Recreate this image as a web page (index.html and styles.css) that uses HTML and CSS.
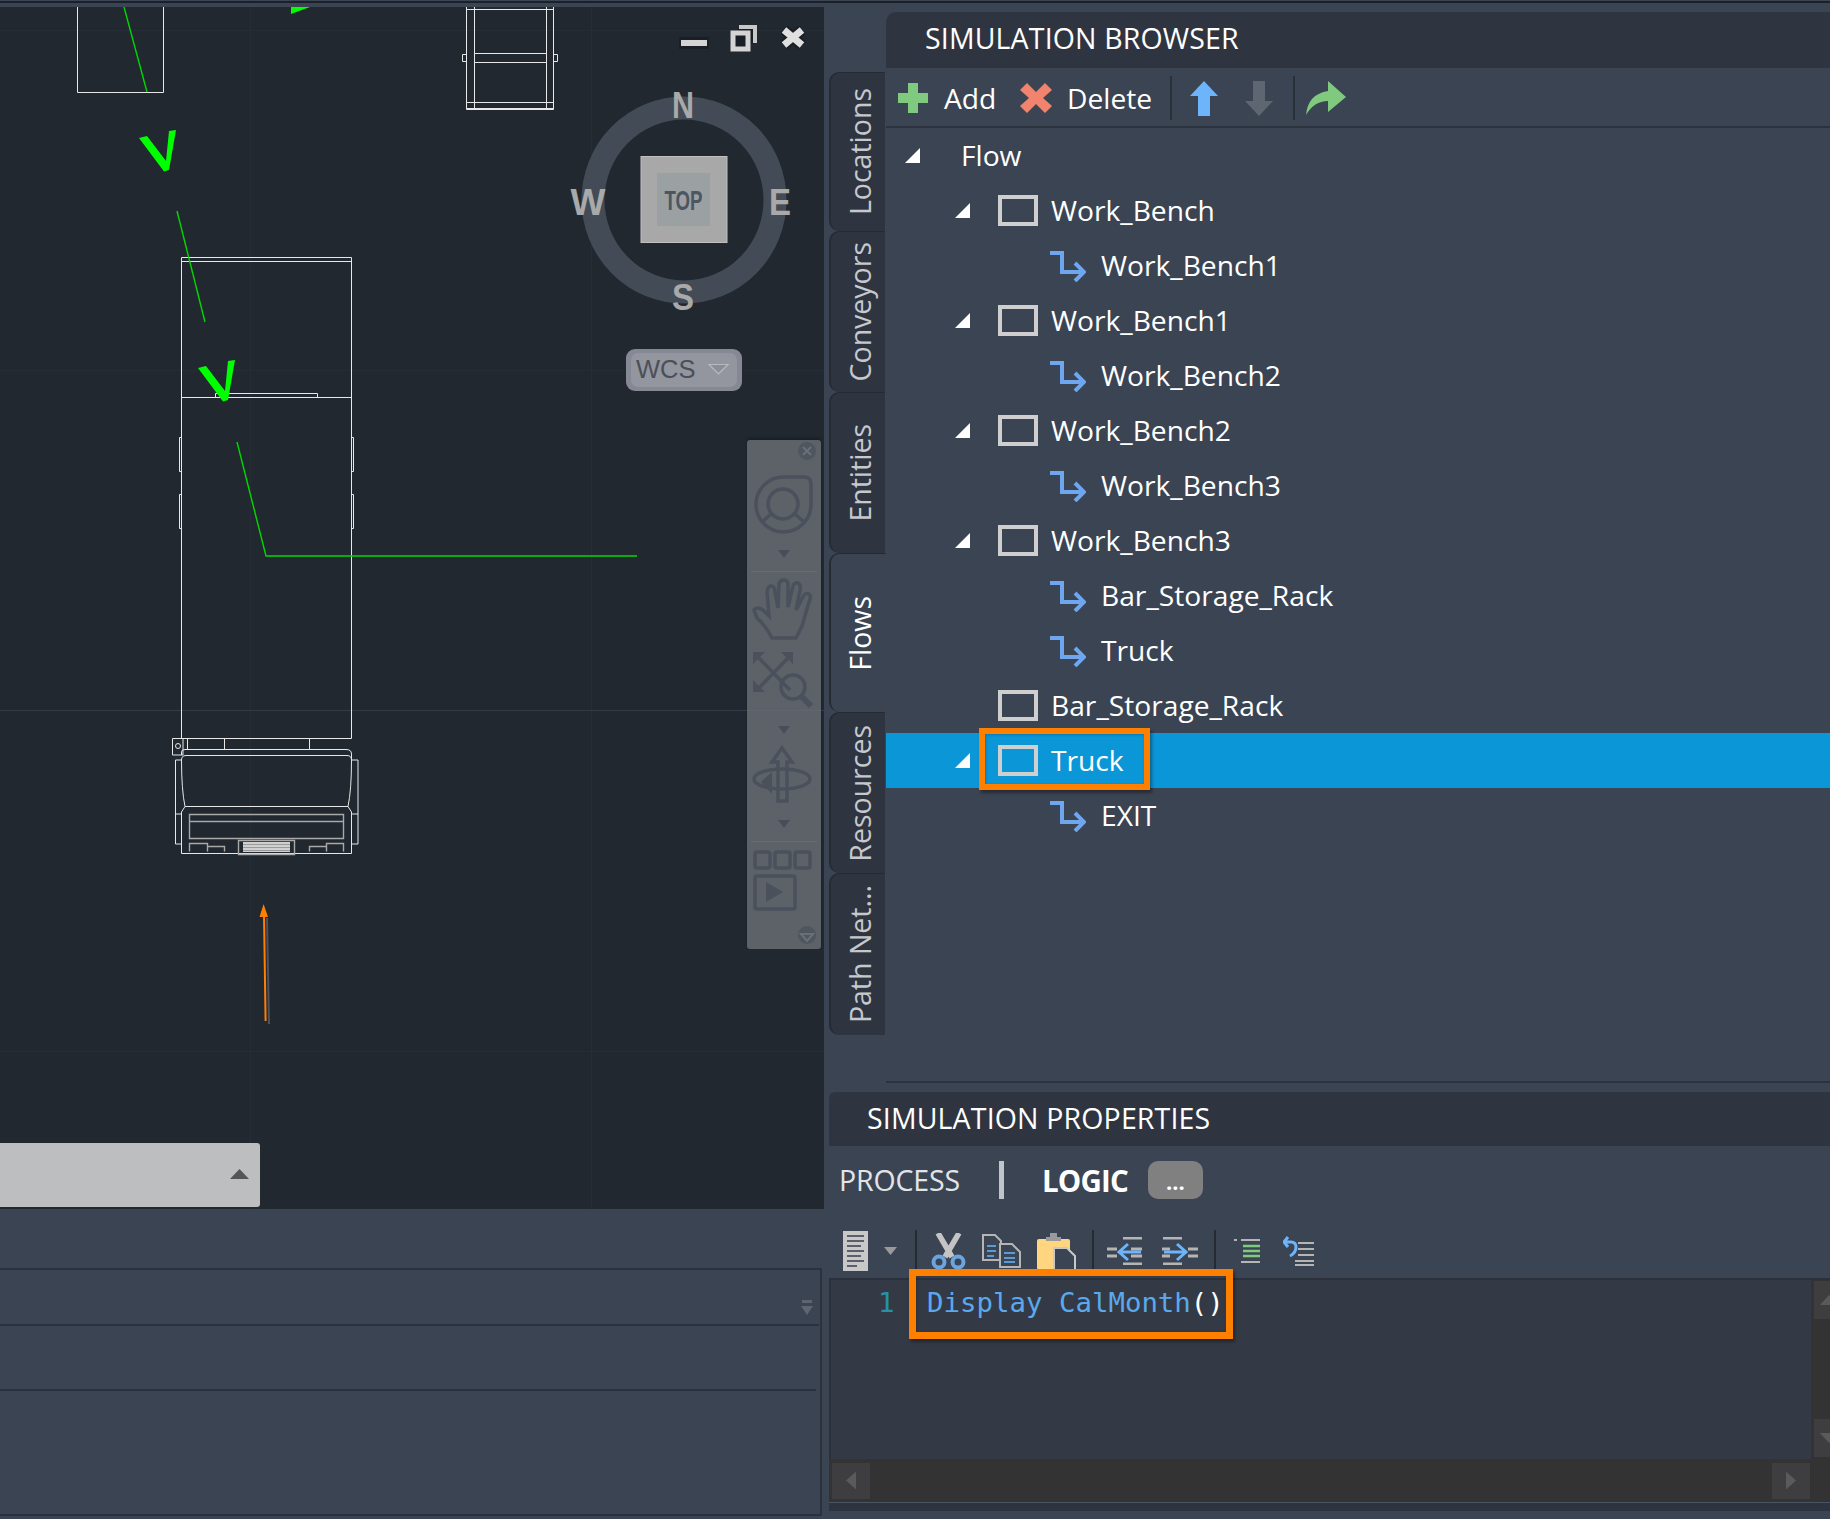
FILE: index.html
```html
<!DOCTYPE html>
<html lang="en">
<head>
<meta charset="UTF-8" />
<title>Simulation Browser</title>
<link rel="stylesheet" href="styles.css">
</head>
<body>
<svg class="defs" width="0" height="0">
  <symbol id="box" viewBox="0 0 40 31"><rect x="2" y="2" width="36" height="27" fill="none" stroke="#cfcfcf" stroke-width="4"/></symbol>
  <symbol id="link" viewBox="0 0 36 32"><path d="M0 3H12V22H31" fill="none" stroke="#6ea6f0" stroke-width="4"/><path d="M25 13L34 22L25 31" fill="none" stroke="#6ea6f0" stroke-width="4"/></symbol>
  <symbol id="caret" viewBox="0 0 12 8"><path d="M0 0H12L6 8Z" fill="#474e59"/></symbol>
</svg>

<div class="top-band"></div>
<div class="layout">

  <div class="left">
    <!-- cad viewport -->
    <div class="viewport">
      <svg class="canvas" viewBox="0 7 824 1202" width="824" height="1202">
        <g class="grid">
          <path d="M0 30.5H824M0 370.5H824M0 1051.5H824M250.5 7V1209M591.5 7V1209"/>
          <path class="grid-main" d="M0 710.5H824"/>
        </g>
        <g class="wire">
          <path d="M77.5 7V92.5H163.5V7"/>
          <path d="M466.5 7V109.5H553.5V7M474.5 7V109M546.5 7V109M466 9.5H554M474 53.5H546M474 62.5H546M466 102.5H554M466 108.5H554"/>
          <path d="M466 54.5H462.5V61.5H466M554 54.5H557.5V61.5H554"/>
          <path d="M181.5 257.5H351.5V738.5H181.5ZM181.5 261.5H351.5M181.5 397.5H351.5M215.5 397V393.5H317.5V397"/>
          <path d="M181 437.5H179.5V471.5H181M181 494.5H179.5V528.5H181M352 437.5H353.5V471.5H352M352 494.5H353.5V528.5H352"/>
          <path d="M187.5 738V749M224.5 738V749M309.5 738V749"/>
          <path d="M172.5 738.5H183V755H172.5Z"/>
          <circle cx="178" cy="746" r="2.5"/>
          <path d="M181.5 755V752Q181.5 749.5 185 749.5H346Q351.5 749.5 351.5 754V760"/>
          <path d="M181.5 760Q181.5 755.5 186 755.5H347Q351.5 755.5 351.5 760Q351.5 790 348 806.5H185Q181.5 790 181.5 760Z"/>
          <path d="M181.5 760H175.5V814H181.5M351.5 760H358V814H351.5"/>
          <path d="M185 806.5L181.5 812V853.5H351.5V812L348 806.5M175.5 814V844H181.5M358 814V844H351.5"/>
          <path class="wire-dim" d="M189.5 814.5H343.5V838.5H189.5ZM189.5 821.5H343.5"/>
          <path class="wire-dim" d="M238.5 840.5H294.5V854.5H238.5Z"/>
          <path class="wire-dim" d="M189.5 851.5V843.5H207.5V851.5M207.5 846.5H224.5V851.5M343.5 851.5V843.5H326.5V851.5M326.5 846.5H309.5V851.5"/>
        </g>
        <rect class="grille" x="243" y="842" width="47" height="10"/>
        <path class="grille-lines" d="M243 844.5H290M243 847.5H290M243 850.5H290"/>
        <g class="green-thin">
          <path d="M124 7L147 92"/>
          <path d="M177 211L205 322"/>
          <path d="M237 442L266 556H637"/>
        </g>
        <g class="green-fill">
          <polygon points="291,14 291,7 310,7"/>
          <polygon points="139,138 147,136 166,161 169,131 176,130 169,170 164,171.5"/>
          <polygon points="198,368 206,366 225,391 228,361 235,360 228,400 223,401.5"/>
        </g>
        <path class="arrow-shadow" d="M267 918L269 1024"/>
        <path class="arrow-shaft" d="M264 914L265.6 1021"/>
        <polygon class="arrow-head" points="263.6,904 259.5,917 268,917"/>
      </svg>

      <svg class="win-ctrls" viewBox="675 20 135 35" width="135" height="35">
        <rect class="win-halo" x="679" y="37" width="30" height="12"/>
        <rect class="win-icon" x="681" y="40" width="26" height="6"/>
        <path class="win-halo-line" d="M738 28H754V44H748V50H732V34H738Z"/>
        <path class="win-line" d="M739 27H755V43" />
        <rect class="win-box" x="733" y="33" width="15" height="16"/>
        <path class="win-x-halo" d="M784 30L802 45M802 30L784 45"/>
        <path class="win-x" d="M784 30L802 45M802 30L784 45"/>
      </svg>

      <svg class="viewcube" viewBox="570 85 230 315" width="230" height="315">
        <ellipse class="cube-ring" cx="684" cy="200" rx="91" ry="92"/>
        <rect class="cube-face" x="641" y="156.5" width="86" height="86"/>
        <rect class="cube-inner" x="657" y="173" width="53" height="53"/>
        <text class="cube-top" x="683.5" y="210" textLength="38" lengthAdjust="spacingAndGlyphs">TOP</text>
        <text class="cube-dir" x="683" y="118" textLength="22" lengthAdjust="spacingAndGlyphs">N</text>
        <text class="cube-dir" x="683" y="310" textLength="22" lengthAdjust="spacingAndGlyphs">S</text>
        <text class="cube-dir" x="588" y="215" textLength="35" lengthAdjust="spacingAndGlyphs">W</text>
        <text class="cube-dir" x="780" y="215" textLength="22" lengthAdjust="spacingAndGlyphs">E</text>
        <rect class="wcs-btn" x="626" y="349" width="116" height="42" rx="9"/>
        <rect class="wcs-in" x="631" y="353" width="106" height="34" rx="7"/>
        <text class="wcs-txt" x="636" y="378">WCS</text>
        <path class="wcs-caret" d="M709 364.5H728L718.500 374Z"/>
      </svg>

      <div class="nav-bar">
        <svg viewBox="747 440 74 509" width="74" height="509">
          <g class="nav-ic">
            <circle cx="807" cy="451" r="9" class="nav-solid"/>
            <path class="nav-x" d="M803 447L811 455M811 447L803 455"/>
            <path d="M783 477H804Q811 477 811 484V504A27.500 27.500 0 1 1 783 477Z"/>
            <circle cx="783" cy="504" r="15"/>
            <path d="M771 514L762 522M795 514L804 522"/>
            <use href="#caret" x="778" y="550" width="12" height="8"/>
            <path class="nav-sep" d="M751 571.500H817"/>
            <path d="M772 638Q766 626 757 618L754 610Q757 606 763 610L769 616L767 592Q768 586 771 586Q775 586 775 592L778 608L779 584Q780 580 784 580Q788 580 788 585L788 607L793 586Q795 582 798 583Q801 585 800 590L796 610L804 595Q807 592 810 595Q811 598 809 602L802 626L796 638Z"/>
            <path d="M757 656L790 690M790 656L757 690"/>
            <path class="nav-fill" d="M753 652H765L753 664ZM793 652H781L793 664ZM753 692H765L753 680Z"/>
            <circle cx="793" cy="687" r="12"/>
            <path class="nav-thick" d="M802 697L811 706"/>
            <use href="#caret" x="778" y="726" width="12" height="8"/>
            <path d="M778 801V762H772L782 748L792 762H787V801Z"/>
            <ellipse cx="782" cy="779" rx="28" ry="10"/>
            <path class="nav-fill" d="M761 782L772 772V794Z"/>
            <use href="#caret" x="778" y="820" width="12" height="8"/>
            <path class="nav-sep" d="M751 841.500H817"/>
            <rect x="755" y="852" width="15" height="16" rx="2"/>
            <rect x="775" y="852" width="15" height="16" rx="2"/>
            <rect x="795" y="852" width="15" height="16" rx="2"/>
            <rect x="755" y="876" width="40" height="33" rx="2"/>
            <path class="nav-fill" d="M766 882L783 892L766 902Z"/>
            <circle cx="807" cy="935" r="9" class="nav-solid"/>
            <path class="nav-x" d="M801 934H813L807 941Z"/>
          </g>
        </svg>
      </div>

      <div class="layout-tab"><span class="layout-arrow"></span></div>
    </div>

    <!-- command area -->
    <div class="cmd-box">
      <div class="cmd-row first">
        <svg class="cmd-ic" viewBox="0 0 12 16" width="12" height="16"><path d="M1 0H11V3H1ZM0 6H12L6 15Z" fill="#5e6570"/></svg>
      </div>
      <div class="cmd-row second"></div>
    </div>
  </div>

  <div class="right">
    <div class="browser-area">
      <div class="side-tabs">
        <div class="side-tab t1"><span>Locations</span></div>
        <div class="side-tab t2"><span>Conveyors</span></div>
        <div class="side-tab t3"><span>Entities</span></div>
        <div class="side-tab t4 active"><span>Flows</span></div>
        <div class="side-tab t5"><span>Resources</span></div>
        <div class="side-tab t6"><span>Path Net...</span></div>
      </div>

      <div class="browser">
        <div class="panel-title browser-title">SIMULATION BROWSER</div>
        <div class="browser-tools">
          <div class="tool-btn add">
            <svg viewBox="0 0 30 30" width="30" height="30"><path d="M10 0H20V10H30V20H20V30H10V20H0V10H10Z" fill="#7fca7f"/></svg>
            <span>Add</span>
          </div>
          <div class="tool-btn del">
            <svg viewBox="0 0 32 30" width="32" height="30"><path d="M7 0L16 9L25 0L32 7L23 15L32 23L25 30L16 21L7 30L0 23L9 15L0 7Z" fill="#f2846e"/></svg>
            <span>Delete</span>
          </div>
          <div class="tool-sep"></div>
          <svg class="up" viewBox="0 0 28 35" width="28" height="35"><path d="M14 0L28 15H20V35H8V15H0Z" fill="#6db4fb"/></svg>
          <svg class="down" viewBox="0 0 28 35" width="28" height="35"><path d="M14 35L28 20H20V0H8V20H0Z" fill="#5d6671"/></svg>
          <div class="tool-sep s2"></div>
          <svg class="share" viewBox="0 0 40 34" width="40" height="34"><path d="M0 34Q2 13 22 10V0L40 16L22 31V20Q8 20 0 34Z" fill="#7fca7f"/></svg>
        </div>

        <div class="tree">
          <div class="row lvl0"><span class="exp"></span><span class="lbl">Flow</span></div>
          <div class="row lvl1"><span class="exp"></span><svg class="box-ic"><use href="#box"/></svg><span class="lbl">Work_Bench</span></div>
          <div class="row lvl2"><svg class="link-ic"><use href="#link"/></svg><span class="lbl">Work_Bench1</span></div>
          <div class="row lvl1"><span class="exp"></span><svg class="box-ic"><use href="#box"/></svg><span class="lbl">Work_Bench1</span></div>
          <div class="row lvl2"><svg class="link-ic"><use href="#link"/></svg><span class="lbl">Work_Bench2</span></div>
          <div class="row lvl1"><span class="exp"></span><svg class="box-ic"><use href="#box"/></svg><span class="lbl">Work_Bench2</span></div>
          <div class="row lvl2"><svg class="link-ic"><use href="#link"/></svg><span class="lbl">Work_Bench3</span></div>
          <div class="row lvl1"><span class="exp"></span><svg class="box-ic"><use href="#box"/></svg><span class="lbl">Work_Bench3</span></div>
          <div class="row lvl2"><svg class="link-ic"><use href="#link"/></svg><span class="lbl">Bar_Storage_Rack</span></div>
          <div class="row lvl2"><svg class="link-ic"><use href="#link"/></svg><span class="lbl">Truck</span></div>
          <div class="row lvl1"><span class="exp none"></span><svg class="box-ic"><use href="#box"/></svg><span class="lbl">Bar_Storage_Rack</span></div>
          <div class="row lvl1 selected"><span class="exp"></span><svg class="box-ic"><use href="#box"/></svg><span class="lbl">Truck</span><div class="callout truck-callout"></div></div>
          <div class="row lvl2"><svg class="link-ic"><use href="#link"/></svg><span class="lbl">EXIT</span></div>
        </div>
      </div>
    </div>

    <div class="props">
      <div class="panel-title props-title">SIMULATION PROPERTIES</div>
      <div class="props-tabs">
        <span class="ptab">PROCESS</span>
        <span class="ptab-sep"></span>
        <span class="ptab on">LOGIC</span>
        <span class="more-btn">...</span>
      </div>
      <div class="code-tools">
        <svg viewBox="0 0 25 40" width="25" height="40"><rect width="25" height="40" fill="#c8c8c8"/><path d="M4 5H21M4 10H21M4 15H18M4 20H21M4 25H18M4 30H21M4 35H14" stroke="#59606b" stroke-width="2"/></svg>
        <svg class="ct-caret" viewBox="0 0 13 8" width="13" height="8"><path d="M0 0H13L6.500 8Z" fill="#9a9a9a"/></svg>
        <div class="ct-sep"></div>
        <svg class="ct-after-sep" viewBox="0 0 35 36" width="35" height="36"><path d="M7 0L21 24M28 0L14 24" stroke="#c4c4c4" stroke-width="5.500" fill="none"/><circle cx="8" cy="29" r="5.500" stroke="#6aa5e0" stroke-width="4" fill="none"/><circle cx="27" cy="29" r="5.500" stroke="#6aa5e0" stroke-width="4" fill="none"/></svg>
        <svg viewBox="0 0 39 34" width="39" height="34"><path d="M1 1H13L19 7V26H1Z" fill="none" stroke="#b5b5b5" stroke-width="2"/><path d="M5 12H14M5 17H14M5 22H12" stroke="#5b9bd5" stroke-width="2"/><path d="M18 10H30L38 18V33H18Z" fill="#3b4453" stroke="#b5b5b5" stroke-width="2"/><path d="M22 19H33M22 24H33M22 28H33" stroke="#5b9bd5" stroke-width="2"/></svg>
        <svg viewBox="0 0 39 37" width="39" height="37"><rect x="0" y="6" width="33" height="31" rx="2" fill="#ffd580"/><path d="M9 8V4H13V0H20V4H24V8Z" fill="#9a9a9a"/><path d="M17 15H30L38 23V37H17Z" fill="#3b4453" stroke="#c8c8c8" stroke-width="2"/></svg>
        <div class="ct-sep s2"></div>
        <svg class="ct-out" viewBox="0 0 36 28" width="36" height="28"><path d="M16 1H35M0 12H10M24 12H35M0 19H10M24 19H35M16 27H35" stroke="#b5b5b5" stroke-width="3"/><path d="M34 15H14M21 7L12 15L21 23" stroke="#6db4fb" stroke-width="3" fill="none"/></svg>
        <svg class="ct-in" viewBox="0 0 36 28" width="36" height="28"><path d="M1 1H20M1 27H20M0 12H8M26 12H36M0 19H8M26 19H36" stroke="#b5b5b5" stroke-width="3"/><path d="M2 15H22M15 7L24 15L15 23" stroke="#6db4fb" stroke-width="3" fill="none"/></svg>
        <div class="ct-sep s3"></div>
        <svg class="ct-list" viewBox="0 0 26 24" width="26" height="24"><path d="M0 1H3M7 1H26M7 23H26" stroke="#b5b5b5" stroke-width="2"/><path d="M9 7H26M9 12H26M9 17H26" stroke="#7fca7f" stroke-width="2.500"/></svg>
        <svg class="ct-undo" viewBox="0 0 32 30" width="32" height="30"><path d="M15 7H31M15 13H31M15 19H31M12 25H31M12 29H31" stroke="#b5b5b5" stroke-width="2"/><path d="M1 6H8Q13 6 13 11Q13 17 7 20M5 1L1 6L5 11" stroke="#6db4fb" stroke-width="3" fill="none"/></svg>
      </div>

      <div class="editor">
        <div class="editor-main">
          <div class="code-area">
            <div class="code-line">
              <span class="line-no">1</span>
              <div class="code"><span class="kw">Display CalMonth</span>()<div class="callout code-callout"></div></div>
            </div>
          </div>
          <div class="hscroll">
            <span class="sb-btn"><span class="tri left"></span></span>
            <span class="sb-btn"><span class="tri right"></span></span>
          </div>
        </div>
        <div class="vscroll">
          <span class="sb-btn v"><span class="tri up"></span></span>
          <span class="sb-btn v"><span class="tri dn"></span></span>
        </div>
      </div>
      <div class="props-foot"></div>
    </div>
  </div>
</div>
</body>
</html>
```

FILE: styles.css
```css
/* Basic reset */
* {
  box-sizing: border-box;
}

html, body {
  margin: 0;
  width: 1830px;
  height: 1519px;
  overflow: hidden;
  background: #3b4453;
  color: #fff;
  font-family: "Open Sans", "Noto Sans", sans-serif;
  font-size: 28.2px;
}

.defs {
  position: absolute;
}

.top-band {
  height: 7px;
  border-top: 2px solid #1c2129;
  margin-top: 1px;
  margin-bottom: -1px;
}

.layout {
  display: flex;
  height: 1512px;
}

/* Left column: viewport + command area */
.left {
  width: 824px;
  flex: none;
}

.viewport {
  position: relative;
  height: 1202px;
  background: #212830;
  overflow: hidden;
}

.canvas {
  display: block;
}

.grid path {
  fill: none;
  stroke: #252d36;
  stroke-width: 1;
}

.grid .grid-main {
  stroke: #323c49;
}

.wire path, .wire circle {
  fill: none;
  stroke: #e8e8e8;
  stroke-width: 1;
}

.wire .wire-dim {
  stroke: #a9a9a9;
  stroke-width: 1.4;
}

.grille {
  fill: #d0d0d0;
}

.grille-lines {
  stroke: #9a9a9a;
  stroke-width: 1;
}

.green-thin path {
  fill: none;
  stroke: #00d800;
  stroke-width: 1.4;
}

.green-fill polygon {
  fill: #00ff00;
}

.arrow-shadow {
  stroke: #4d525b;
  stroke-width: 2;
}

.arrow-shaft {
  stroke: #ff8000;
  stroke-width: 2;
}

.arrow-head {
  fill: #ff8000;
}

/* Viewport overlays */
.win-ctrls {
  position: absolute;
  left: 675px;
  top: 13px;
}

.win-halo {
  fill: #1a1f26;
}

.win-icon {
  fill: #d4d4d4;
}

.win-halo-line {
  fill: #1a1f26;
}

.win-line {
  fill: none;
  stroke: #c8c8c8;
  stroke-width: 4;
}

.win-box {
  fill: #1a1f26;
  stroke: #d4d4d4;
  stroke-width: 5;
}

.win-x-halo {
  fill: none;
  stroke: #1a1f26;
  stroke-width: 11;
}

.win-x {
  fill: none;
  stroke: #e0e0e0;
  stroke-width: 7;
}

.viewcube {
  position: absolute;
  left: 570px;
  top: 78px;
}

.cube-ring {
  fill: none;
  stroke: #434c56;
  stroke-width: 23;
}

.cube-face {
  fill: #a8a8a8;
  stroke: #c0c0c0;
}

.cube-inner {
  fill: #9ba0a3;
}

.cube-top {
  fill: #4d5560;
  font: bold 28px "Liberation Sans", sans-serif;
  text-anchor: middle;
}

.cube-dir {
  fill: #a9a9a9;
  font: bold 37px "Liberation Sans", sans-serif;
  text-anchor: middle;
}

.wcs-btn {
  fill: #868995;
}

.wcs-in {
  fill: #93959f;
}

.wcs-txt {
  fill: #4b4f58;
  font: 25.500px "Liberation Sans", sans-serif;
}

.wcs-caret {
  fill: #8b8e99;
  stroke: #b8bac2;
  stroke-width: 1.2;
}

.nav-bar {
  position: absolute;
  left: 747px;
  top: 433px;
  width: 74px;
  height: 509px;
  background: rgba(115, 120, 125, 0.72);
  border-radius: 3px;
  box-shadow: 0 -2px 2px #1a1f26;
}

.nav-bar svg {
  display: block;
}

.nav-ic circle, .nav-ic rect, .nav-ic path, .nav-ic ellipse {
  fill: none;
  stroke: #4a515c;
  stroke-width: 3.5;
}

.nav-ic .nav-solid {
  fill: #4f565f;
  stroke: none;
}

.nav-ic .nav-x {
  stroke: #6a7078;
  stroke-width: 2;
}

.nav-ic .nav-sep {
  stroke: #666c73;
  stroke-width: 1;
}

.nav-ic .nav-fill {
  fill: #4a515c;
  stroke: none;
}

.nav-ic .nav-thick {
  stroke-width: 6;
}

.layout-tab {
  position: absolute;
  left: 0;
  top: 1136px;
  width: 260px;
  height: 64px;
  background: #bcbebf;
  border-radius: 0 3px 3px 0;
}

.layout-arrow {
  position: absolute;
  right: 11px;
  top: 26px;
  width: 19px;
  height: 10px;
  background: #555;
  clip-path: polygon(50% 0, 100% 100%, 0 100%);
}

/* Command area */
.cmd-box {
  margin-top: 59px;
  width: 822px;
  height: 248px;
  border: 2px solid #2b323d;
  border-left: none;
}

.cmd-row {
  border-bottom: 2px solid #2b323d;
  position: relative;
}

.cmd-row.first {
  height: 56px;
  margin-right: 1px;
}

.cmd-row.second {
  height: 65px;
  margin-right: 4px;
}

.cmd-ic {
  position: absolute;
  right: 6px;
  top: 30px;
}

/* Right column */
.right {
  flex: 1;
  padding-left: 5px;
  min-width: 0;
}

.browser-area {
  display: flex;
  height: 1076px;
  padding-top: 5px;
}

.side-tabs {
  width: 56px;
  margin-top: 60px;
  margin-right: 1px;
  flex: none;
}

.side-tab {
  display: flex;
  align-items: center;
  justify-content: center;
  flex-direction: column;
  background: #2f3540;
  border-radius: 10px 0 0 10px;
  color: #c5c8cd;
  font-size: 28.5px;
  padding-left: 3px;
  border-top: 1px solid #252a33;
  border-left: 2px solid #252a33;
}

.side-tab span {
  writing-mode: vertical-rl;
  transform: rotate(180deg);
  white-space: nowrap;
}

.t1 { height: 159px; }
.t2 { height: 161px; }
.t3 { height: 161px; }
.t4 { height: 159px; }
.t5 { height: 161px; }
.t6 { height: 162px; }

.side-tab.active {
  background: #3b4453;
  color: #fff;
  margin-right: -1px;
}

.browser {
  flex: 1;
  min-width: 0;
  display: flex;
  flex-direction: column;
  border-bottom: 2px solid #2d333e;
}

.panel-title {
  background: #2f3540;
  color: #fff;
  font-size: 28.5px;
  letter-spacing: 0.15px;
  display: flex;
  align-items: center;
}

.browser-title {
  height: 56px;
  padding: 0 0 5px 39px;
  border-radius: 10px 0 0 0;
}

.browser-tools {
  display: flex;
  align-items: center;
  height: 60px;
  padding: 2px 0 0 12px;
  border-bottom: 2px solid #2d333e;
}

.tool-btn {
  display: flex;
  align-items: center;
  gap: 16px;
}

.tool-btn.add {
  width: 122px;
}

.tool-btn.del {
  width: 150px;
  gap: 15px;
}

.tool-sep {
  width: 2px;
  height: 44px;
  background: #2a303a;
}

.up {
  margin-left: 18px;
}

.down {
  margin-left: 27px;
}

.tool-sep.s2 {
  margin-left: 20px;
}

.share {
  margin-left: 11px;
}

/* Tree */
.tree {
  flex: 1;
}

.row {
  display: flex;
  align-items: center;
  height: 55px;
  white-space: nowrap;
  position: relative;
}

.lbl {
  padding-bottom: 2px;
}

.exp {
  width: 15px;
  height: 15px;
  background: #fff;
  clip-path: polygon(100% 0, 100% 100%, 0 100%);
  flex: none;
}

.exp.none {
  background: none;
}

.lvl0 {
  padding-left: 19px;
}

.lvl0 .exp {
  margin-right: 41px;
}

.lvl1 {
  padding-left: 69px;
}

.lvl1 .exp {
  margin-right: 28px;
}

.lvl2 {
  padding-left: 164px;
}

.box-ic {
  width: 40px;
  height: 31px;
  margin-right: 13px;
  flex: none;
}

.link-ic {
  width: 36px;
  height: 32px;
  margin-right: 15px;
  flex: none;
}

.row.selected {
  background: #0b96d8;
}

.callout {
  position: absolute;
  border: 6px solid #ff8000;
  box-shadow: 2px 3px 3px rgba(0, 0, 0, 0.35), inset 1px 1px 3px rgba(0, 0, 0, 0.2);
}

.truck-callout {
  left: 93px;
  top: -5px;
  width: 171px;
  height: 62px;
}

/* Properties */
.props {
  padding-top: 9px;
}

.props-title {
  height: 54px;
  padding: 0 0 3px 38px;
  border-radius: 6px 0 0 0;
}

.props-tabs {
  display: flex;
  align-items: center;
  height: 66px;
  padding: 2px 0 0 10px;
}

.ptab {
  color: #e2e4e8;
  font-size: 28.5px;
  letter-spacing: -0.15px;
}

.ptab.on {
  color: #fff;
  font-size: 29.5px;
  font-weight: 700;
  letter-spacing: -0.8px;
}

.ptab-sep {
  width: 5px;
  height: 38px;
  background: #c0c5cc;
  margin: 0 38px 0 39px;
}

.more-btn {
  width: 55px;
  height: 38px;
  background: #808080;
  border-radius: 10px;
  margin-left: 20px;
  text-align: center;
  line-height: 40px;
  font-size: 22px;
  font-weight: 700;
}

.code-tools {
  display: flex;
  align-items: center;
  gap: 16px;
  height: 66px;
  padding: 12px 0 0 14px;
}

.code-tools svg {
  flex: none;
}

.ct-sep {
  width: 2px;
  height: 42px;
  background: #262b33;
  margin-left: 2px;
  margin-right: -2px;
  flex: none;
}

.ct-sep.s2 {
  margin-left: 0;
  margin-right: -3px;
}

.ct-in {
  margin-left: 3px;
}

.ct-sep.s3 {
  margin-left: 0;
  margin-right: 2px;
}

.ct-undo {
  margin-left: 7px;
}

/* Editor */
.editor {
  display: flex;
  height: 224px;
  border-top: 2px solid #2b303a;
}

.editor-main {
  width: 982px;
  flex: none;
  display: flex;
  flex-direction: column;
}

.code-area {
  flex: 1;
  background: #343a45;
  border-left: 2px solid #2b303a;
}

.code-line {
  display: flex;
  height: 44px;
  align-items: center;
  font-family: "DejaVu Sans Mono", "Liberation Mono", monospace;
  font-size: 27.4px;
}

.line-no {
  width: 96px;
  padding-left: 47px;
  color: #2a8fa8;
}

.code {
  position: relative;
  white-space: nowrap;
}

.kw {
  color: #5aa9ee;
}

.code-callout {
  left: -18px;
  top: -18px;
  width: 324px;
  height: 70px;
  border-width: 7px;
}

.hscroll {
  height: 43px;
  background: #333;
  display: flex;
  justify-content: space-between;
  align-items: center;
  padding: 0 1px 0 3px;
}

.vscroll {
  flex: 1;
  background: #333;
  display: flex;
  flex-direction: column;
  justify-content: space-between;
  padding: 1px 0 45px 3px;
}

.sb-btn {
  width: 38px;
  height: 36px;
  background: #3e3e41;
  display: flex;
  align-items: center;
  justify-content: center;
}

.sb-btn.v {
  width: 16px;
  height: 38px;
  overflow: hidden;
}

.tri {
  display: block;
  background: #5a5a5a;
  flex: none;
}

.tri.left {
  width: 10px;
  height: 18px;
  clip-path: polygon(100% 0, 100% 100%, 0 50%);
}

.tri.right {
  width: 10px;
  height: 18px;
  clip-path: polygon(0 0, 100% 50%, 0 100%);
}

.tri.up {
  width: 18px;
  height: 10px;
  margin-left: 14px;
  clip-path: polygon(50% 0, 100% 100%, 0 100%);
}

.tri.dn {
  width: 18px;
  height: 10px;
  margin-left: 14px;
  clip-path: polygon(0 0, 100% 0, 50% 100%);
}

.props-foot {
  height: 9px;
  background: #2d3340;
  border-top: 1px solid #4a5563;
}
```
